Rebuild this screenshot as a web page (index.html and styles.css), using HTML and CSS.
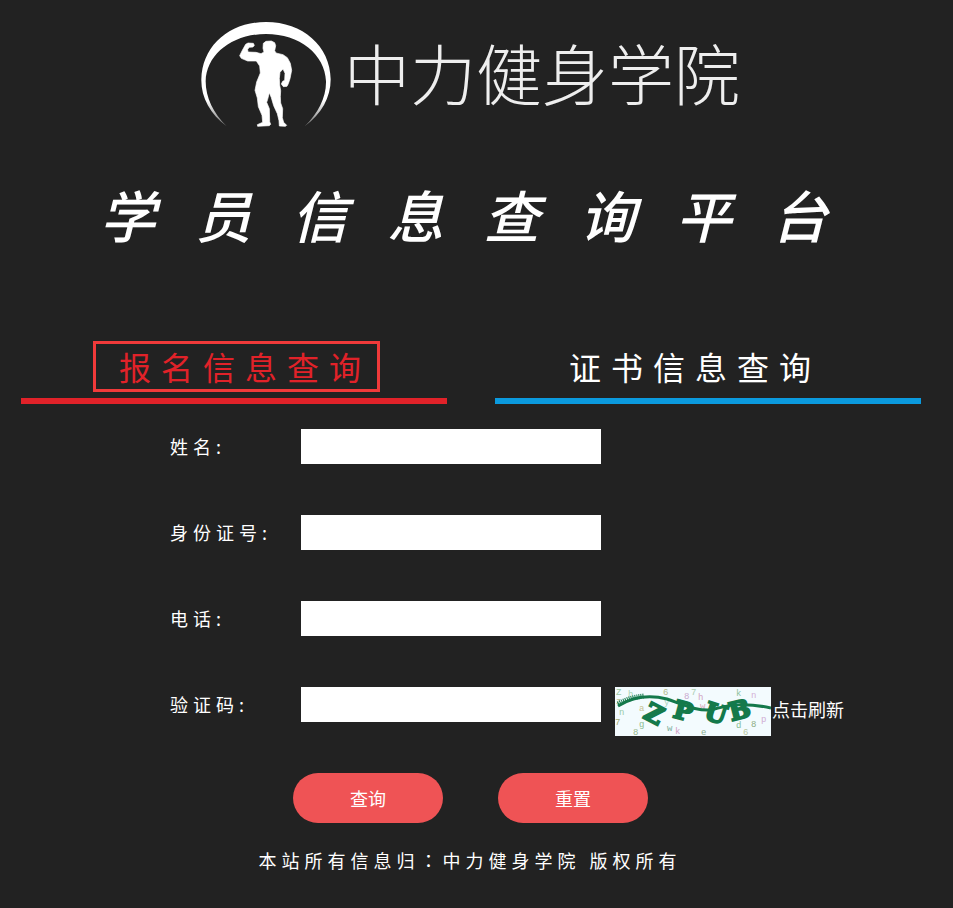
FILE: index.html
```html
<!DOCTYPE html>
<html lang="zh-CN">
<head>
<meta charset="utf-8">
<meta name="viewport" content="width=device-width, initial-scale=1">
<title>学员信息查询平台</title>
<link rel="stylesheet" href="styles.css">
</head>
<body>
<header class="header">
  <div class="brand">
    <svg class="brand-mark" viewBox="30 30 396 324" aria-hidden="true">
      <defs>
        <linearGradient id="fade" x1="0" y1="0" x2="0" y2="1">
          <stop offset="0.75" stop-color="#fff"/>
          <stop offset="1" stop-color="#fff" stop-opacity="0.35"/>
        </linearGradient>
      </defs>
      <path fill="url(#fade)" d="M110 349C60 312 33 262 34 208C36 108 118 36 228 36C338 36 421 108 422 208C422 262 395 312 344 349C384 310 409 263 408 214C405 133 329 72 228 72C127 72 49 133 47 214C47 263 70 310 110 349Z"/>
      <path fill="#fff" stroke="#fff" stroke-width="2" stroke-linejoin="round" d="M167 103L174 99L190 100L193 106L189 111L178 112L173 118L174 126L198 127L213 131L222 126L219 115L220 100L228 94L244 93L254 98L257 107L254 122L258 129L279 134L292 143L301 160L305 181L300 206L295 221L291 229L280 230L274 222L278 214L284 211L285 190L279 177L270 187L268 205L269 225L272 242L271 260L272 279L278 296L277 323L281 337L290 346L286 349L268 348L267 332L262 311L251 287L244 263L238 248L233 268L230 277L238 296L239 335L242 343L238 347L203 349L202 344L218 337L216 316L205 290L202 264L195 241L200 216L211 189L209 168L199 153L173 153L154 145L149 137L157 121Z"/>
    </svg>
    <span class="brand-name">中力健身学院</span>
  </div>
  <h1 class="title">学员信息查询平台</h1>
</header>
<main class="main">
  <nav class="tabs">
    <a class="tab tab-signup" href="#signup"><span class="tab-text">报名信息查询</span></a>
    <a class="tab tab-cert" href="#cert"><span class="tab-text">证书信息查询</span></a>
  </nav>
  <form class="form" id="signup">
    <div class="row">
      <label class="label" for="name">姓名:</label>
      <input class="input" id="name" type="text">
    </div>
    <div class="row">
      <label class="label" for="idno">身份证号:</label>
      <input class="input" id="idno" type="text">
    </div>
    <div class="row">
      <label class="label" for="phone">电话:</label>
      <input class="input" id="phone" type="tel">
    </div>
    <div class="row">
      <label class="label" for="code">验证码:</label>
      <input class="input" id="code" type="text">
      <a class="captcha" href="#refresh">
        <svg class="captcha-image" viewBox="0 0 156 49" role="img" aria-label="验证码">
          <rect width="156" height="49" fill="#f3fbfe"/>
          <g class="noise">
            <text x="1" y="8" fill="#9cc7a4">Z</text>
            <text x="13" y="10" fill="#a9d3b3">h</text>
            <text x="48" y="8" fill="#b5b98c">6</text>
            <text x="76" y="8" fill="#a9cdb0">7</text>
            <text x="69" y="12" fill="#c9a9cf">8</text>
            <text x="83" y="13" fill="#d1a4c4">h</text>
            <text x="121" y="9" fill="#8fc2a0">k</text>
            <text x="136" y="11" fill="#d3b2d6">n</text>
            <text x="1" y="17" fill="#b9bf92">z</text>
            <text x="24" y="24" fill="#c7c295">a</text>
            <text x="49" y="18" fill="#a8d2bd">y</text>
            <text x="85" y="22" fill="#d6a9bb">w</text>
            <text x="4" y="28" fill="#98caa7">n</text>
            <text x="0" y="38" fill="#a5ad73">7</text>
            <text x="24" y="40" fill="#8dbd93">g</text>
            <text x="18" y="48" fill="#98b88c">8</text>
            <text x="52" y="44" fill="#7fae9c">w</text>
            <text x="60" y="47" fill="#d09fc6">k</text>
            <text x="86" y="48" fill="#8cae8f">e</text>
            <text x="121" y="41" fill="#86bd93">d</text>
            <text x="136" y="40" fill="#8dac82">8</text>
            <text x="146" y="35" fill="#d1add3">p</text>
            <text x="128" y="48" fill="#b9c79e">6</text>
          </g>
          <path d="M3 19C19 9 36 8 52 12C72 19 82 24 96 23C112 18 128 15 156 21" fill="none" stroke="#14794b" stroke-width="3"/>
          <path d="M3 17C12 12 19 10 29 9" fill="none" stroke="#14794b" stroke-width="5" stroke-dasharray="1 1"/>
          <g class="code">
            <text x="30" y="36" transform="rotate(27 40 27)">Z</text>
            <text x="59" y="33" transform="rotate(15 69 24)">P</text>
            <text x="90" y="35" transform="rotate(18 101 26)">U</text>
            <text x="114" y="32" transform="rotate(-14 123 23)">B</text>
          </g>
        </svg>
        <span class="refresh">点击刷新</span>
      </a>
    </div>
    <div class="actions">
      <button class="button" type="submit">查询</button>
      <button class="button" type="reset">重置</button>
    </div>
  </form>
</main>
<footer class="footer">本站所有信息归<span class="colon" lang="zh-TW">：</span>中力健身学院 版权所有</footer>
</body>
</html>
```
FILE: styles.css
```css
* {
  box-sizing: border-box;
}

body {
  margin: 0;
  background: #222;
  color: #fff;
  font-family: "Noto Sans CJK SC", sans-serif;
  font-size: 18px;
}

.header {
  padding-top: 20px;
}

.brand {
  display: flex;
  align-items: flex-start;
  justify-content: center;
  gap: 12px;
  padding-right: 13px;
}

.brand-mark {
  width: 132px;
  height: 108px;
}

.brand-name {
  color: #eee;
  font-size: 66px;
  font-weight: 300;
  line-height: 102px;
}

.title {
  margin: 46px 0 0;
  padding-left: 14px;
  font-size: 56px;
  font-style: italic;
  font-weight: 500;
  letter-spacing: 40px;
  line-height: 80px;
  text-align: center;
  white-space: nowrap;
}

.main {
  padding: 87px 32px 0 21px;
}

.tabs {
  display: grid;
  grid-template-columns: 1fr 1fr;
  gap: 48px;
}

.tab {
  display: flex;
  padding-bottom: 6px;
  border-bottom: 6px solid;
  font-size: 32px;
  letter-spacing: 10px;
  line-height: 45px;
  text-decoration: none;
  white-space: nowrap;
}

.tab-text {
  border: 3px solid transparent;
}

.tab-signup {
  padding-left: 72px;
  border-color: #e12229;
  color: #e12229;
}

.tab-signup .tab-text {
  padding: 0 6px 0 23px;
  border-color: #f03a3a;
}

.tab-cert {
  padding-left: 71px;
  border-color: #0b9ade;
}

.tab-cert .tab-text {
  color: #fff;
}

.form {
  display: flex;
  flex-direction: column;
  gap: 51px;
  padding: 25px 0 0 149px;
}

.row {
  display: flex;
  align-items: flex-start;
}

.label {
  flex: 0 0 131px;
  letter-spacing: 5px;
  line-height: 35px;
}

.input {
  width: 300px;
  height: 35px;
  padding: 0 8px;
  border: 0;
  border-radius: 0;
  background: #fff;
  font: inherit;
  color: #222;
}

.captcha {
  display: flex;
  align-items: flex-start;
  gap: 1px;
  margin-left: 14px;
  color: #fff;
  text-decoration: none;
  white-space: nowrap;
}

.captcha-image {
  width: 156px;
  height: 49px;
}

.refresh {
  line-height: 45px;
}

.noise {
  font: 9px "Liberation Mono", monospace;
}

.code {
  fill: #14794b;
  stroke: #14794b;
  stroke-width: 2;
  font: bold 25px "DejaVu Serif", serif;
}

.actions {
  display: flex;
  gap: 55px;
  margin-top: -14px;
  padding-left: 123px;
}

.button {
  width: 150px;
  height: 50px;
  padding: 0;
  border: 0;
  border-radius: 25px;
  background: #ef5355;
  color: #fff;
  font: inherit;
}

.footer {
  padding: 22px 13px 32px 0;
  letter-spacing: 5px;
  line-height: 30px;
  text-align: center;
}

.colon {
  font-family: "Noto Sans CJK TC", sans-serif;
}
```
